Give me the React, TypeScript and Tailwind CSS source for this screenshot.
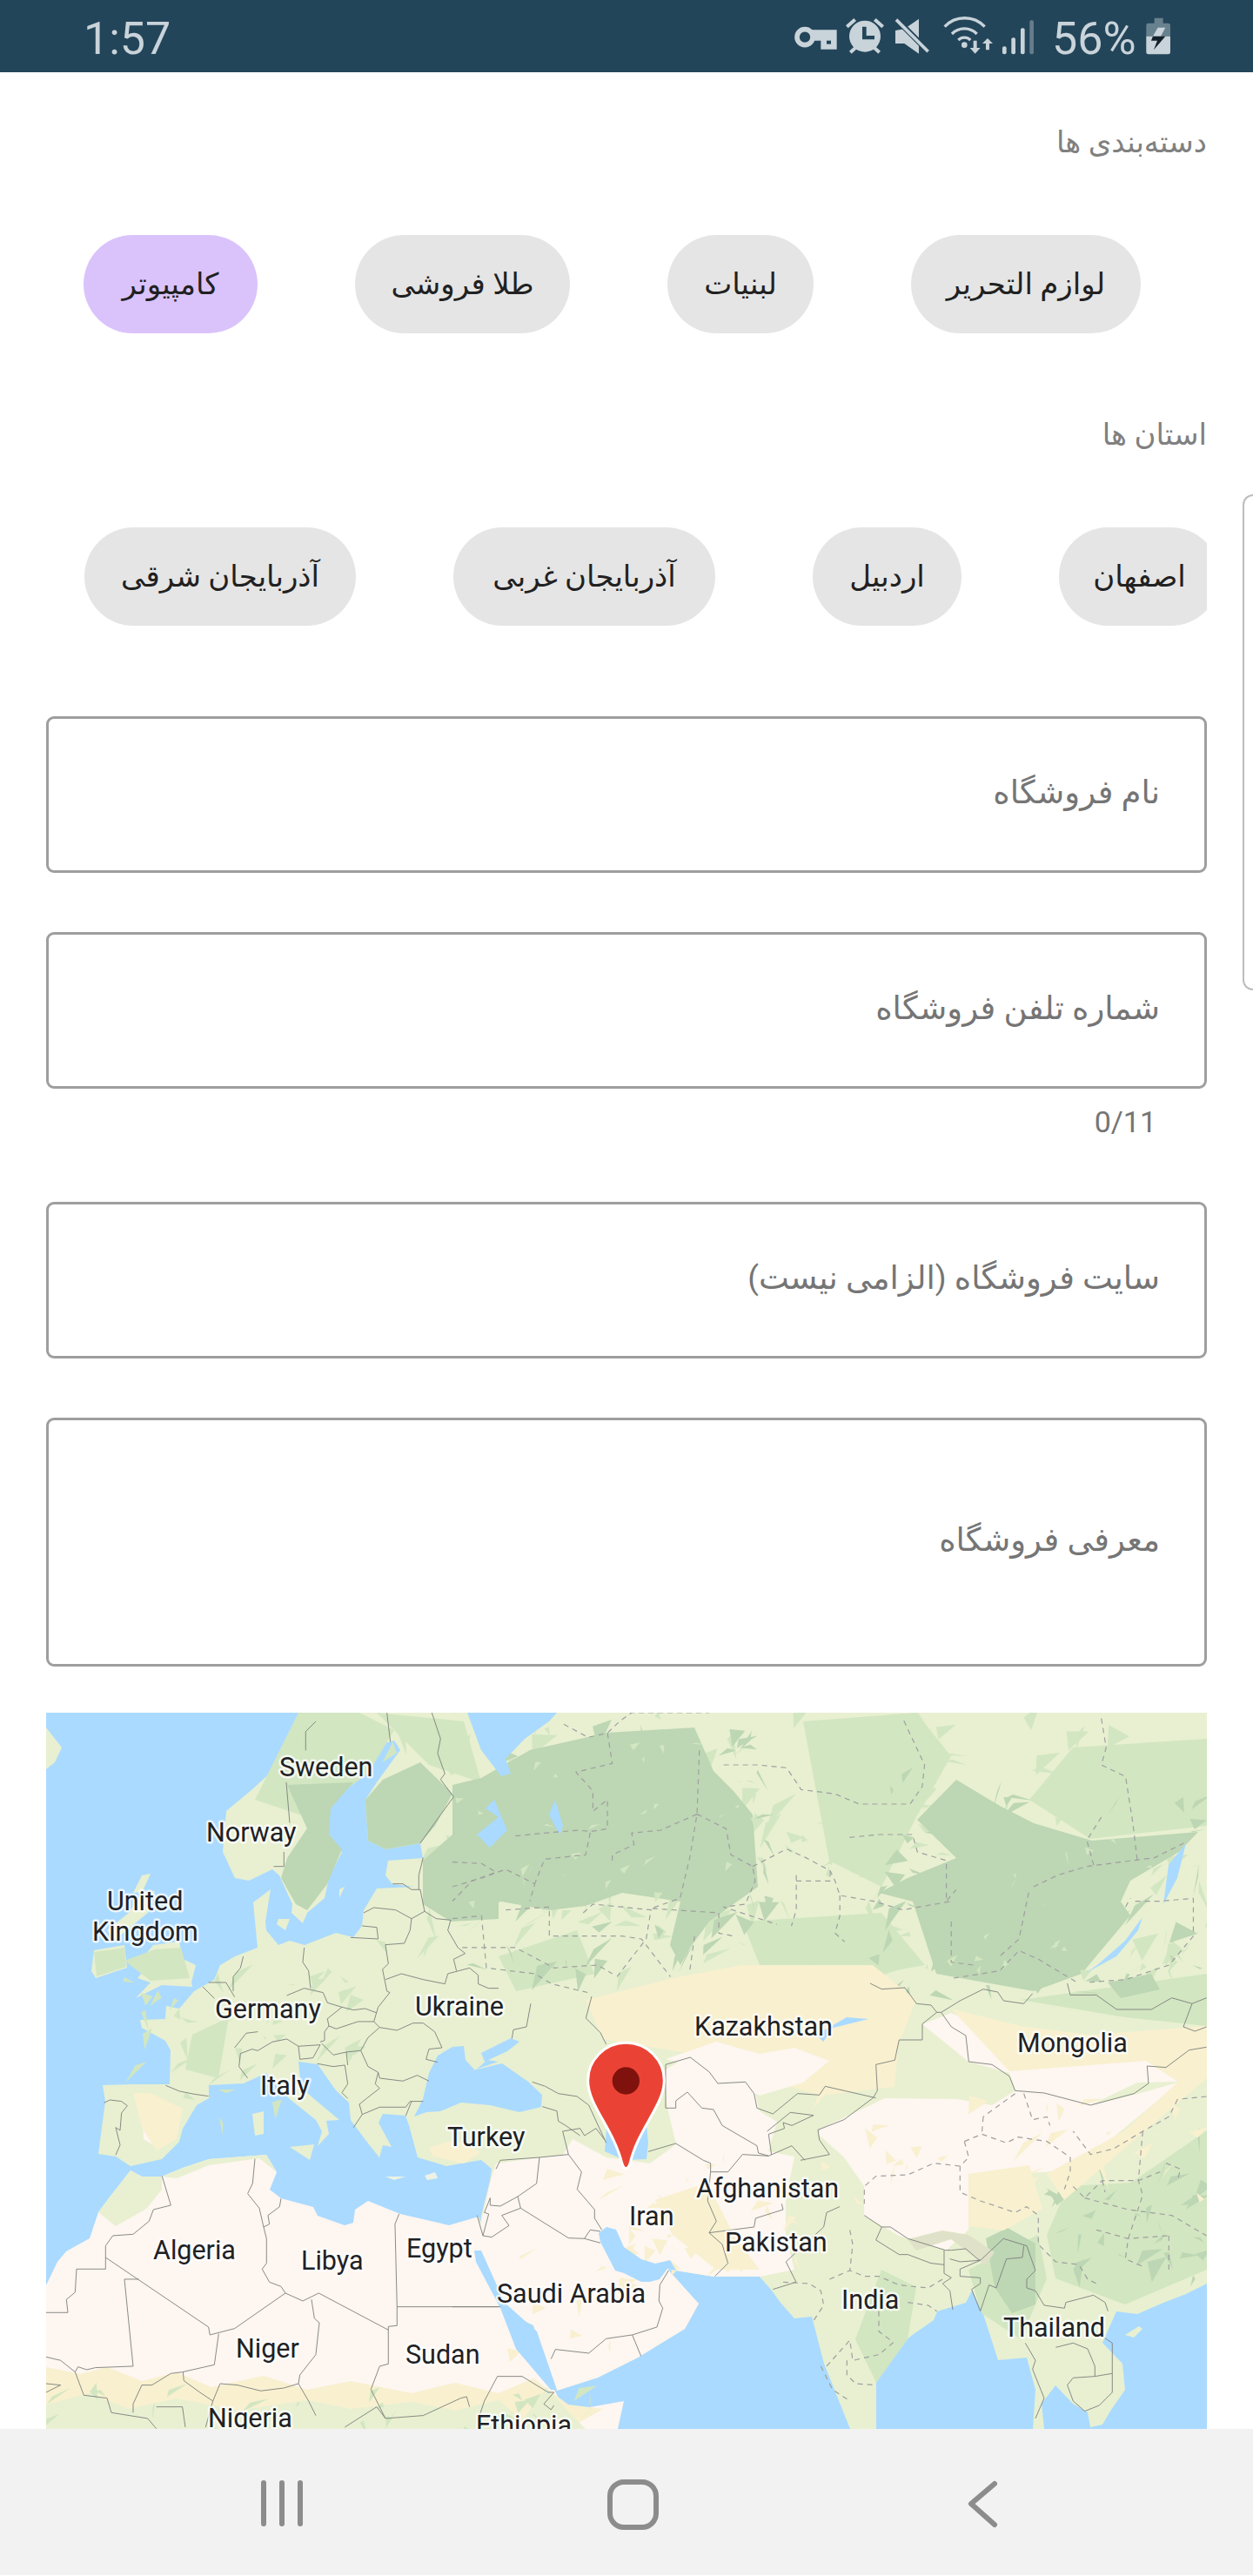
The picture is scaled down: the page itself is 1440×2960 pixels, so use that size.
import type { ReactNode } from "react";

const SEA = "#aadaff";
const LAND = "#e8f0d1";
const MID = "#d2e6c1";
const FOREST = "#bdd6b4";
const PALE = "#fef6f0";
const SAND = "#f8f0cf";

// land and water outlines, in map pixels
const EURASIA =
  "290,0 277,43 260,67 237,88 207,113 203,160 217,190 233,193 260,180 268,187 283,220 282,230 295,242 300,230 320,213 325,190 340,160 325,140 325,113 350,77 373,50 370,40 400,32 407,43 380,80 367,100 370,147 390,157 430,150 433,167 393,170 390,187 398,197 423,200 380,202 365,227 363,245 353,258 333,253 297,267 280,262 267,267 253,250 252,240 258,203 238,218 242,260 243,270 217,280 200,290 193,307 170,320 153,340 138,337 137,352 108,353 110,362 137,377 143,388 142,427 100,427 65,428 68,447 60,507 80,510 97,521 133,513 153,493 157,478 173,451 187,443 187,428 227,426 253,414 280,444 310,468 317,481 312,498 325,484 322,469 337,468 313,448 293,431 290,401 312,404 333,434 348,448 350,468 367,491 383,511 387,497 397,499 382,471 387,461 413,463 417,474 427,511 460,521 500,514 512,524 510,538 500,578 495,616 517,658 527,688 560,704 587,779 634,764 680,741 734,708 750,679 720,658 715,639 724,641 767,648 820,648 834,664 844,678 860,696 880,694 894,748 924,823 954,823 954,778 954,754 994,716 1020,698 1024,688 1057,678 1064,664 1077,691 1094,744 1127,741 1137,778 1134,823 1147,823 1144,794 1160,773 1180,794 1197,804 1200,821 1214,818 1224,801 1240,778 1237,748 1214,724 1230,688 1254,691 1284,678 1310,668 1334,656 1334,0";
const AFRICA =
  "0,658 13,631 23,619 50,604 60,574 72,558 97,526 110,533 133,533 157,523 187,513 253,508 265,528 257,548 270,558 307,568 312,578 343,589 353,586 355,571 370,561 407,576 463,589 497,579 503,601 497,628 520,664 524,688 540,724 574,758 584,778 597,803 664,791 657,823 0,823";
const WATER = [
  "433,444 440,414 450,394 467,384 480,383 482,399 493,411 507,399 520,401 490,411 524,403 554,424 570,439 569,453 544,459 510,451 477,448 453,458 437,459 423,464",
  "500,391 534,374 544,378 530,389 504,401",
  "492,618 500,618 527,678 564,711 587,778 580,778 540,731 522,684 494,631",
  "635,598 644,591 655,594 664,614 684,628 700,633 717,629 724,641 714,639 705,651 694,654 684,654 664,644 654,641 637,608",
  "655,420 644,478 642,504 664,514 690,513 692,494 690,474 680,430",
  "484,0 500,43 523,73 534,70 528,53 550,30 578,10 587,0",
  "484,0 520,20 534,5 520,0",
  "520,120 505,110 515,100 530,135 510,155 495,140",
  "578,117 585,100 594,130 590,140",
  "1284,220 1300,190 1310,150 1290,175",
  "1193,300 1230,280 1255,250 1260,235 1240,262 1208,290",
  "885,370 920,350 945,352 905,362 893,378",
];
const ISLANDS = [
  "237,461 250,458 250,484 240,486",
  "280,499 308,496 303,514",
  "110,283 123,267 153,263 157,283 172,290 167,310 168,315 133,313 103,328 120,310 105,305 115,293",
  "55,273 90,267 93,293 57,305 52,297",
  "80,260 117,230 125,205 100,207 110,187 120,185 110,207 95,230 70,250",
  "0,17 18,40 10,57 0,65",
  "337,203 343,200 337,213",
  "267,237 280,237 275,250 265,243",
  "1240,715 1256,705 1260,708 1250,718",
];
const FORESTS = [
  "467,83 500,75 556,43 645,23 745,17 767,67 790,90 812,117 818,200 762,240 740,270 729,290 717,267 729,217 662,207 620,222 578,227 523,217 467,233",
  "433,170 467,140 520,120 520,237 465,240 433,220",
  "367,100 387,77 430,57 467,93 447,130 430,150 390,157 370,147",
  "277,83 353,80 327,110 325,140 340,157 323,197 300,227 287,220 270,190 277,167 300,133",
  "1001,123 1046,77 1096,107 1135,127 1202,147 1324,137 1302,160 1246,193 1235,217 1246,233 1190,300 1135,320 1023,300 996,217 957,207 990,190 1046,167",
  "1220,310 1270,300 1280,318 1235,328",
  "1080,604 1105,592 1137,610 1137,680 1110,690 1090,660",
];
const MIDS = [
  "1180,40 1334,30 1334,130 1200,145 1130,100",
  "870,10 1000,0 1040,50 1000,120 960,200 900,170",
  "290,0 360,0 400,20 370,70 300,120 240,100",
  "380,0 480,10 500,80 440,60",
  "800,240 960,230 1010,290 900,310 820,290",
  "90,285 125,272 155,270 165,305 120,308",
  "55,275 90,270 92,292 58,303",
  "1120,330 1334,300 1334,360 1240,350",
  "1174,544 1247,540 1334,480 1334,640 1240,680 1160,650 1150,600",
  "960,640 1000,660 990,720 954,770 930,720",
  "520,280 610,250 630,300 540,320",
  "168,370 210,350 198,420 160,410",
  "1060,640 1140,600 1150,650 1120,720 1075,690",
];
const SAND_NORTH = "620,330 720,305 800,290 950,290 1000,330 980,380 975,430 890,440 820,420 760,395 700,385 640,375";
const SANDS = [
  "1040,340 1120,360 1200,370 1334,360 1334,420 1310,430 1264,400 1107,412",
  "1060,530 1130,520 1145,570 1100,595 1060,590",
  "1150,530 1240,480 1300,425 1334,420 1240,500 1170,560",
  "100,437 120,437 157,455 150,490 127,503 110,477",
  "700,560 760,540 790,600 820,640 770,640 720,600",
  "440,500 470,490 500,505 480,518 445,510",
];
const PALES = [
  "510,540 517,518 567,511 594,508 605,490 644,511 694,518 724,496 714,454 710,411 740,394 760,408 814,434 820,458 840,470 830,504 860,510 850,560 850,600 860,640 820,648 767,648 724,641 714,639 750,679 734,708 680,741 634,764 587,779 560,704 527,688 495,616 497,600",
  "890,478 964,443 1047,444 1087,451 1114,434 1200,451 1254,438 1304,424 1247,471 1214,498 1194,524 1147,528 1100,530 1064,544 1060,594 1034,618 980,601 940,578 940,544 917,511 887,484",
  "1007,358 1060,401 1107,414 1114,434 1200,451 1254,425 1304,424 1264,398 1160,380 1090,365 1040,345",
  "110,448 130,470 125,498 112,490",
  "712,398 770,378 820,392 860,385 900,400 870,425 820,440 760,410",
];
const SAHEL_SAND = "0,752 40,760 70,752 110,768 150,758 190,775 250,762 300,778 350,768 420,782 470,770 520,782 560,765 600,795 640,800 600,823 0,823";
const AFRICA_GREEN = [
  "60,574 72,558 97,526 110,533 133,533 133,548 115,570 80,590",
  "133,533 157,523 187,513 253,508 265,528 245,512 187,520 150,535",
  "0,795 50,782 95,800 150,788 220,802 300,790 350,800 420,792 470,802 520,790 560,823 0,823",
  "540,823 575,775 600,803 620,823",
];

// borders, copied per zoom tile so the numbers stay readable
const SOLID_EU = [
  "930,30 895,65 895,130", "828,240 840,380", "820,480 820,530 785,530", "1175,0 1187,100",
  "1330,0 1360,90 1350,140 1375,210 1360,230 1405,290 1340,380 1290,450",
  "412,1285 460,1305 510,1315 560,1322",
  "200,1345 220,1335 260,1340 280,1355 260,1380 255,1440 240,1430 255,1490 240,1525",
  "540,945 580,985", "560,930 620,930 650,980", "680,840 670,880 645,910 645,960",
  "890,810 885,860 905,890 912,950",
  "830,975 890,950 955,965 970,1000 1020,1015 970,1055 975,1080 1000,1090 1075,1065 1130,1065 1150,1085 1210,1095 1265,1070 1300,1070 1340,1100 1365,1155 1320,1160 1310,1195 1350,1205",
  "1020,1015 1060,1025 1100,1020 1140,1035",
  "1170,800 1180,865 1160,885 1175,960 1185,965 1145,1015 1130,1065",
  "1150,1085 1110,1120 1085,1165 1035,1170 990,1180 950,1140",
  "975,1080 960,1100 960,1130 945,1135", "650,1155 690,1105 730,1100",
  "670,1175 710,1160 730,1165 780,1135 830,1125 870,1150 945,1145",
  "870,1150 875,1195 920,1190 945,1145", "670,1175 665,1220 695,1260",
  "935,1210 990,1220 1030,1215 1040,1280 1020,1310 1040,1330", "1035,1170 1040,1215",
  "1085,1165 1110,1220 1145,1240 1150,1260 1230,1270 1280,1250 1320,1270",
  "1145,1240 1135,1280 1150,1295 1105,1330 1080,1350 1090,1385 1150,1360 1240,1360 1255,1340 1300,1340",
  "1090,1385 1060,1430", "1240,1390 1260,1340",
  "1095,690 1130,672 1205,680 1260,710 1305,685 1345,710 1395,715",
  "1260,710 1255,750 1235,795 1170,800", "1050,775 1145,780 1140,740 1090,735",
  "1195,590 1230,590 1260,610 1290,610 1305,685", "1300,500 1285,560 1285,610",
  "1170,920 1225,900 1300,920 1375,935 1385,900 1460,880 1490,905 1490,935 1525,950 1560,950",
  "1395,715 1385,750 1420,810 1445,830 1405,850 1415,890",
];
const SOLID_AF = [
  "400,665 430,765 370,780 355,820 300,865 230,870 205,905 205,985 105,985 100,1065 70,1090 75,1135 0,1135",
  "205,945 560,1185 565,1212 650,1190 825,1068",
  "320,1020 270,1020 300,1320 170,1325 140,1332 110,1322 100,1340 50,1300 0,1288",
  "595,1208 580,1315 470,1340 430,1345 365,1385 330,1385 300,1450 300,1480",
  "720,605 712,690 695,725 735,775 750,840",
  "810,742 805,770 765,800 770,830 750,840 760,880 760,965 745,985 770,1030 810,1045 825,1068",
  "825,1068 885,1095 940,1068 1180,1195", "915,1090 925,1155 942,1170 930,1280 875,1350 870,1380",
  "1217,795 1203,830 1210,1115 1210,1180 1180,1183 1180,1312 1150,1320 1120,1400 1140,1440 1170,1500 1300,1490 1430,1430 1450,1425 1460,1460",
  "1210,1115 1560,1115",
  "472,1340 475,1370 530,1410 575,1440 600,1380 660,1385 740,1405 820,1395 870,1380 905,1440 930,1490",
  "575,1440 550,1530", "100,1340 130,1420 210,1430 225,1480 350,1500 380,1535",
  "380,1460 470,1460 480,1530", "1030,1530 1140,1460 1170,1500", "0,1380 50,1385 0,1410",
];
const SOLID_ME = [
  "480,45 460,120 510,170 530,210", "270,70 255,150 210,160 205,190",
  "735,280 820,255 885,305 915,345 1010,340 1040,380 1050,430 1105,450 1190,380 1265,385 1285,355 1460,395",
  "735,280 735,430 770,430 770,405 810,375 860,430 900,435 930,490 1050,560 1055,585 1090,595 1170,560 1215,610",
  "675,580 770,552 865,610 890,620 890,650 880,750 910,820 885,860 930,900 950,965 905,1010",
  "885,860 1040,840 1045,810 1140,780 1135,760", "890,650 950,650 1000,590 1090,595",
  "1335,770 1290,790 1280,840 1225,890 1150,960 1185,1030 1105,1055",
  "1085,510 1165,445 1245,455 1170,490 1140,480 1145,500 1090,520 1100,590",
  "300,600 290,690 225,735 235,775 400,878 455,880 510,895", "455,880 475,850 510,855",
  "380,510 400,590 445,650 430,710 490,780 490,810 515,850", "150,640 165,610 300,600 400,590",
  "225,735 165,768 130,765 130,740 110,790 125,795 105,870", "235,775 170,800 195,835 135,875 105,870 85,800",
  "340,1295 355,1262 470,1275 530,1225 620,1212 650,1285", "620,1212 705,1185 725,1120 712,1095 715,1040 745,990",
  "90,1500 110,1440 155,1355 240,1355 330,1410 350,1410 315,1450 340,1470 350,1455",
  "275,340 320,355 365,380 430,390 470,420 530,550", "310,425 360,440 365,475 390,490 440,525",
  "380,510 440,500 455,525 495,500 525,540", "0,1115 90,1115 165,1115",
];
const SOLID_ASIA = [
  "300,0 340,20 420,15 460,70 510,75 530,100 545,100 610,60 690,20 740,30 760,60 830,70 860,35",
  "980,0 990,40 1080,40 1150,90 1270,90 1340,50 1410,70 1460,50", "1410,70 1380,150 1420,165 1460,150",
  "530,100 480,140 480,195 400,195 385,265 320,280 325,370 310,395 210,470 120,505 125,540 160,590 60,610",
  "545,100 580,150 630,180 640,270 720,280 780,320 800,370 900,378 1060,420 1210,380 1260,345 1255,285 1320,290 1400,230 1460,220",
  "280,800 340,840 370,840 430,880 560,920 580,920 630,915 670,950 680,955 760,880 840,905 870,990 840,1020 840,1050 870,1060 900,1110 970,1120 975,1100 1070,1075 1110,1100 1120,1130",
  "340,840 320,885 400,935 430,935 510,965 555,970 555,920", "555,970 555,1000 580,1015 550,1035 575,1060 585,1125",
  "575,950 610,960 680,955 610,985 610,1010 680,1015 680,1035 650,1055 680,1130 710,1040 735,1050 770,950 825,945 830,905",
  "835,1240 870,1300 860,1330 900,1430 870,1500", "940,1255 1000,1240 1050,1260 1075,1320 1075,1355 1135,1345 1135,1240 1075,1200",
  "980,1385 1000,1360 1075,1355", "980,1385 1000,1440 1040,1475 1090,1455 1135,1410 1135,1345",
];
const DASHED_ASIA = [
  "625,545 685,520 770,550 810,530 910,545 990,600 990,650 970,710", "690,460 685,520", "800,380 690,460",
  "830,380 860,470 910,460 920,490", "625,545 640,600 610,630 610,720 680,750 800,790 840,770 880,800 880,900 940,960 1020,970 1050,1020 1090,1040",
  "610,630 520,620 430,660 320,665 280,700 280,760", "1240,510 1225,680 1240,730 1190,880 1180,950 1250,980",
  "1330,870 1330,1000", "1040,740 1190,780 1340,800 1460,870", "1100,680 1110,720",
  "1360,400 1330,460 1240,510 1140,570 1060,590 1000,510", "1460,390 1360,400", "1320,620 1370,640 1360,680",
  "1000,700 1040,740 1100,680 1225,680 1300,650", "1080,850 1190,880 1330,870",
  "150,1320 230,1230 240,1300 330,1280 390,1230", "0,1030 90,1035 130,1060 140,1110 100,1170",
  "160,1020 230,990 280,1010 330,1010 400,1040 500,1050 550,1020", "230,850 240,900 230,990",
  "330,1130 330,1200 370,1230", "220,1300 220,1350 250,1380 320,1385", "130,1320 170,1400 230,1440",
  "430,1100 500,1110 530,1130",
];
const DASHED_RU = [
  "230,40 280,85 320,70 345,30 370,0 530,0", "320,70 330,175 255,205 290,270 290,340 320,300 320,400 285,410",
  "510,130 505,350 490,500 470,640 410,675 550,690", "505,350 430,405 370,415 375,455 330,490 330,520",
  "130,425 190,415 260,405 285,410 275,490 190,505 170,590", "0,515 60,520 90,550 40,580 0,650",
  "560,180 630,180 690,190 720,265 790,280 840,315 945,315 970,255 975,180 930,20",
  "505,350 565,400 575,490 620,530 625,580 605,660 560,670 670,730", "620,530 690,470 730,500 780,545 790,580 800,630 870,650 930,680 1030,650",
  "710,560 710,680 700,735", "710,580 780,580 780,545", "800,630 800,700 790,760 810,790", "820,430 880,420 950,420 960,480 1020,510 1020,650 1040,610",
  "1340,20 1350,120 1340,180 1390,220 1405,380 1415,520", "1340,360 1310,440 1325,530",
  "1410,650 1460,650 1530,640 1530,770 1480,870 1390,920 1310,930", "1390,670 1400,640",
  "1030,720 1030,860 1075,870", "1035,915 1130,890 1170,820 1210,850 1290,930",
  "1190,620 1170,780 1130,840", "1200,600 1250,560 1310,530 1450,500 1510,450",
  "0,710 60,700 70,880 170,900 205,935 280,965", "110,680 200,670 200,770 290,770 350,770 390,780 450,910",
  "270,690 290,660 410,680 400,780 340,910", "20,810 130,810 210,880 300,870 330,900",
  "500,770 490,890", "550,690 550,760 580,770", "0,600 60,570 110,540 170,590 160,650",
];

// seeded so every run draws the same shards
function shards(count: number, x0: number, x1: number, y0: number, y1: number, seed: number, size: number) {
  let s = seed;
  const r = () => {
    s = (s * 16807) % 2147483647;
    return s / 2147483647;
  };
  return Array.from({ length: count }, () => {
    const x = x0 + r() * (x1 - x0);
    const y = y0 + r() * (y1 - y0);
    return `${x},${y} ${x + (r() - 0.5) * size},${y + r() * size} ${x + r() * size},${y + (r() - 0.5) * size}`;
  });
}

const LABELS: [string, number, number][] = [
  ["Sweden", 268, 73], ["Norway", 184, 148], ["United", 70, 227], ["Kingdom", 53, 262],
  ["Germany", 194, 351], ["Ukraine", 424, 348], ["Italy", 246, 439], ["Turkey", 461, 498],
  ["Algeria", 123, 628], ["Libya", 293, 640], ["Egypt", 414, 626], ["Niger", 218, 741],
  ["Sudan", 413, 748], ["Nigeria", 186, 821], ["Ethiopia", 494, 829], ["Saudi Arabia", 518, 678],
  ["Kazakhstan", 745, 371], ["Iran", 670, 589], ["Afghanistan", 747, 557], ["Pakistan", 780, 619],
  ["India", 914, 685], ["Mongolia", 1116, 390], ["Thailand", 1100, 717],
];

function Lines({ items, dashed, transform }: { items: string[]; dashed?: boolean; transform: string }) {
  return (
    <g transform={transform} fill="none" stroke={dashed ? "#9f9f9f" : "#7c7f7c"} strokeLinejoin="round">
      {items.map((p) => (
        <polyline
          key={p}
          points={p}
          vectorEffect="non-scaling-stroke"
          strokeWidth={dashed ? 1.2 : 0.9}
          strokeDasharray={dashed ? "6 5" : undefined}
        />
      ))}
    </g>
  );
}

function Polys({ items, fill }: { items: string[]; fill: string }) {
  return (
    <>
      {items.map((p) => (
        <polygon key={p} points={p} fill={fill} />
      ))}
    </>
  );
}

function WorldMap() {
  return (
    <svg viewBox="0 0 1334 823" className="block h-[823px] w-[1334px]">
      <rect width="1334" height="823" fill={SEA} />
      <polygon points={EURASIA} fill={LAND} />
      <Polys items={ISLANDS} fill={LAND} />
      <Polys items={MIDS} fill={MID} />
      <Polys items={shards(200, 370, 1334, 0, 300, 11, 30)} fill={MID} />
      <Polys items={shards(36, 90, 370, 290, 470, 31, 22)} fill={MID} />
      <Polys items={shards(30, 1150, 1334, 480, 650, 41, 24)} fill={FOREST} />
      <Polys items={shards(70, 450, 830, 10, 295, 17, 28)} fill={FOREST} />
      <Polys items={shards(80, 945, 1334, 70, 330, 29, 28)} fill={FOREST} />
      <Polys items={FORESTS} fill={FOREST} />
      <Polys items={shards(30, 470, 810, 30, 230, 71, 12)} fill={MID} />
      <Polys items={shards(30, 1010, 1300, 110, 310, 83, 14)} fill={MID} />
      <polygon points={SAND_NORTH} fill={SAND} />
      <Polys items={PALES} fill={PALE} />
      <Polys items={SANDS} fill={SAND} />
      <polygon points="1000,618 1040,605 1080,635 1090,620 1060,600 1030,595 990,605" fill="#dfe2c8" />
      <polygon points={AFRICA} fill={PALE} />
      <polygon points={SAHEL_SAND} fill={SAND} />
      <Polys items={AFRICA_GREEN} fill={LAND} />
      <Polys items={shards(34, 640, 900, 500, 640, 53, 20)} fill={SAND} />
      <Polys items={shards(28, 890, 1330, 430, 560, 61, 24)} fill={SAND} />
      <Polys items={shards(14, 530, 720, 600, 760, 67, 22)} fill={SAND} />
      <Polys items={shards(26, 0, 640, 775, 823, 97, 22)} fill={MID} />
      <Polys items={WATER} fill={SEA} />
      <Polys items={["390,533 413,533 400,537", "435,532 447,528 450,535 438,537"]} fill="#eef2e4" />
      <Lines items={SOLID_EU} transform="scale(0.3333)" />
      <Lines items={SOLID_AF} transform="translate(0 311) scale(0.3333)" />
      <Lines items={SOLID_ME} transform="translate(467 311) scale(0.3333)" />
      <Lines items={SOLID_ASIA} transform="translate(847 311) scale(0.3333)" />
      <Lines items={DASHED_ASIA} dashed transform="translate(847 311) scale(0.3333)" />
      <Lines items={DASHED_RU} dashed transform="translate(467 0) scale(0.5565 0.3333)" />
      <g
        fontFamily="Roboto, sans-serif"
        fontSize="30.5"
        fill="#202124"
        stroke="#ffffff"
        strokeOpacity="0.75"
        strokeWidth="5"
        strokeLinejoin="round"
        paintOrder="stroke"
      >
        {LABELS.map(([name, x, y]) => (
          <text key={name} x={x} y={y}>
            {name}
          </text>
        ))}
      </g>
      <g transform="translate(467 311) scale(0.3333)">
        <path
          d="M598 205C672 205 730 265 730 335C730 420 640 500 612 622Q606 638 598 638Q590 638 585 622C555 500 467 420 467 335C467 265 525 205 598 205Z"
          fill="#ea4335"
          stroke="#ffffff"
          strokeWidth="9"
        />
        <circle cx="598" cy="336" r="47" fill="#7f120d" />
      </g>
    </svg>
  );
}

// traced at 3x, same origin as the status bar crop
function StatusIcons() {
  const dark = "#234559";
  return (
    <svg viewBox="0 0 480 83" className="absolute left-[880px] top-0 h-[83px] w-[480px]" fill="#c9d3da">
      <g transform="scale(0.3333)">
        {/* key */}
        <circle cx="135" cy="128" r="27" fill="none" stroke="#c9d3da" strokeWidth="17" />
        <path d="M158 103h87v67h-55v-30h-32z" />
        <path d="M210 140h15v12h-15z" fill={dark} />
        {/* alarm */}
        <circle cx="342" cy="125" r="54" />
        <path d="M276 88l28 -25l8 9l-28 25zM408 88l-28 -25l-8 9l28 25zM288 176l22 -20l8 9l-22 20zM396 176l-22 -20l-8 9l22 20z" />
        <path d="M333 92h14v31h28v13h-42z" fill={dark} />
        {/* muted speaker */}
        <path d="M528 65v120l-50 -35h-31v-45l31 -5z" />
        <path d="M444 60l118 118" stroke={dark} strokeWidth="20" />
        <path d="M450 68l110 110" stroke="#c9d3da" strokeWidth="11" />
        {/* wifi */}
        <g fill="none" stroke="#c9d3da" strokeWidth="10">
          <path d="M617 92a95 95 0 0 1 138 0" />
          <path d="M642 117a60 60 0 0 1 86 0" />
          <path d="M664 138a30 30 0 0 1 42 0" />
        </g>
        <circle cx="685" cy="155" r="10" />
        <path d="M716 140h12v25h12l-18 20l-18 -20h12zM759 172h12v-22h12l-18 -18l-18 18h12z" />
        {/* signal */}
        <rect x="816" y="160" width="14" height="27" rx="6" />
        <rect x="847" y="130" width="14" height="57" rx="6" />
        <rect x="879" y="97" width="14" height="90" rx="6" />
        <rect x="910" y="70" width="14" height="117" rx="6" opacity="0.4" />
        {/* battery */}
        <path d="M1340 62h30v18h18q7 0 7 7v38h-83v-38q0 -7 7 -7h21z" opacity="0.42" />
        <path d="M1312 125h83v55q0 7 -7 7h-69q-7 0 -7 -7z" />
        <path d="M1352 95h26l-16 30h-27z" />
        <path d="M1335 125h43l-40 47l12 -32h-21z" fill="#14202a" />
      </g>
    </svg>
  );
}

function NavBar() {
  return (
    <div className="flex h-[168px] items-center bg-[#f2f2f2]">
      <svg viewBox="0 0 1440 168" className="h-[168px] w-[1440px]">
        <g fill="none" stroke="#8c8c8c" strokeLinecap="round" strokeLinejoin="round" strokeWidth="6">
          <path d="M303 62v47M324 62v47M345 62v47" />
          <rect x="701" y="61" width="53" height="52" rx="16" />
          <path d="M1143 63l-27 23l27 24" />
        </g>
      </svg>
    </div>
  );
}

function Chip({ label, width, active }: { label: string; width: string; active?: boolean }) {
  return (
    <div className={`flex h-[113px] shrink-0 items-center justify-center rounded-full text-[34px] text-[#212121] ${width} ${active ? "bg-[#dac3fb]" : "bg-[#e5e5e5]"}`}>
      {label}
    </div>
  );
}

function Field({ label, tall }: { label: ReactNode; tall?: boolean }) {
  return (
    <div className={`flex items-center rounded-[9px] border-[3px] border-[#9e9e9e] pb-[5px] pr-[51px] text-[37px] text-[#757575] ${tall ? "h-[286px]" : "h-[180px]"}`}>
      {label}
    </div>
  );
}

export default function App() {
  return (
    <div dir="rtl" className="relative h-[2960px] w-[1440px] overflow-hidden bg-white font-['Roboto','DejaVu_Sans',sans-serif]">
      <header dir="ltr" className="relative h-[83px] bg-[#234559] text-[52px] text-[#c9d3da]">
        <span className="absolute left-[96px] top-[6px]">1:57</span>
        <span className="absolute left-[1209px] top-[6px]">56%</span>
        <StatusIcons />
      </header>

      {/* edge panel handle */}
      <div className="absolute right-0 top-[568px] h-[570px] w-[12px] rounded-l-[14px] border-y-2 border-l-2 border-[#bdbdbd]" />

      <main className="mx-[53px] w-[1334px] pt-[60px]">
        <h2 className="text-[34px] leading-[40px] text-[#808080]">دسته‌بندی ها</h2>
        <div className="mt-[87px] flex gap-[112px] pr-[76px]">
          <Chip label="لوازم التحریر" width="w-[264px]" />
          <Chip label="لبنیات" width="w-[168px]" />
          <Chip label="طلا فروشی" width="w-[247px]" />
          <Chip label="کامپیوتر" width="w-[200px]" active />
        </div>
        <h2 className="mt-[96px] text-[34px] leading-[40px] text-[#808080]">استان ها</h2>
        <div className="mt-[87px] flex gap-[112px] overflow-hidden">
          <Chip label="اصفهان" width="-mr-[15px] w-[185px]" />
          <Chip label="اردبیل" width="w-[171px]" />
          <Chip label="آذربایجان غربی" width="w-[301px]" />
          <Chip label="آذربایجان شرقی" width="w-[312px]" />
        </div>

        <div className="mt-[104px] flex flex-col">
          <Field label="نام فروشگاه" />
          <div className="mt-[68px]">
            <Field label="شماره تلفن فروشگاه" />
          </div>
          <div dir="ltr" className="h-[62px] pr-[58px] pt-[18px] text-right text-[34px] leading-[40px] text-[#757575]">
            0/11
          </div>
          <div className="mt-[68px]">
            <Field label="سایت فروشگاه (الزامی نیست)" />
          </div>
          <div className="mt-[68px]">
            <Field label="معرفی فروشگاه" tall />
          </div>
        </div>

        <div className="mt-[53px] h-[823px] overflow-hidden" dir="ltr">
          <WorldMap />
        </div>
      </main>

      <div dir="ltr">
        <NavBar />
      </div>
    </div>
  );
}
